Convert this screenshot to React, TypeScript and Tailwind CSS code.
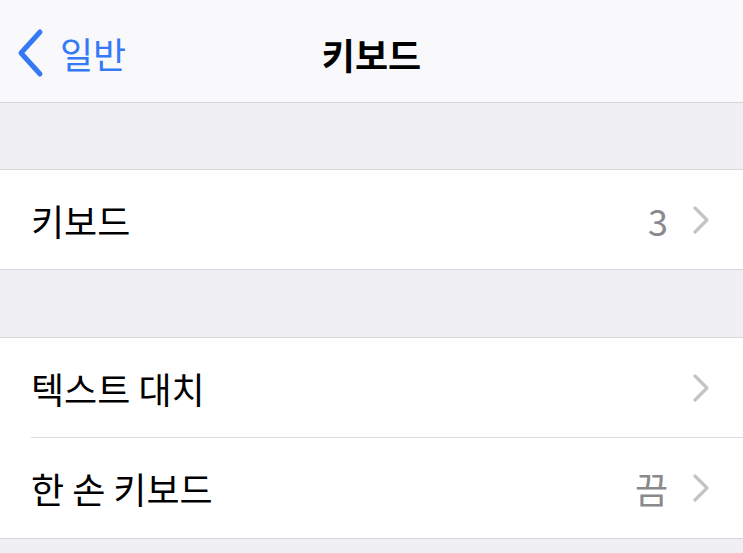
const font = { fontFamily: '"Noto Sans CJK KR", "Noto Sans", sans-serif' };

type Row = { label: string; value?: string };

const groups: Row[][] = [
  [{ label: "키보드", value: "3" }],
  [{ label: "텍스트 대치" }, { label: "한 손 키보드", value: "끔" }],
];

function BackChevron() {
  return (
    <svg width="30" height="50" viewBox="0 0 30 50" fill="none" className="text-[#3579f6]">
      <path d="M25 4 L6 25 L25 46" stroke="currentColor" strokeWidth="5" strokeLinecap="round" strokeLinejoin="round" />
    </svg>
  );
}

function Disclosure() {
  return (
    <svg width="18" height="30" viewBox="0 0 18 30" fill="none" className="text-[#c4c4c8]">
      <path d="M3 3 L15 15 L3 27" stroke="currentColor" strokeWidth="3.2" strokeLinecap="round" strokeLinejoin="round" />
    </svg>
  );
}

export default function App() {
  return (
    <div style={font} className="h-[553px] w-[743px] overflow-hidden bg-[#efeff4] text-black">
      <header className="relative flex h-[103px] items-center border-b border-[#d4d4d8] bg-[#f9f9fb]">
        <div className="flex items-center pl-[15px] pt-[4px] text-[#3579f6]">
          <BackChevron />
          <span className="ml-[15px] text-[36px] leading-none">일반</span>
        </div>
        <h1 className="absolute left-1/2 top-[36px] -translate-x-1/2 text-[36px] font-bold leading-none">키보드</h1>
      </header>

      {groups.map((rows, gi) => (
        <section
          key={gi}
          className={`${gi === 0 ? "mt-[66px]" : "mt-[67px]"} border-y border-[#d8d8dc] bg-white`}
        >
          {rows.map((row, ri) => (
            <div key={row.label} className="pl-[31px]">
              <div
                className={`flex items-center pr-[33px] ${gi === 0 ? "h-[99px]" : "h-[100px]"} ${
                  ri < rows.length - 1 ? "border-b border-[#dcdce0]" : ""
                }`}
              >
                <span className="flex-1 text-[36px] leading-none">{row.label}</span>
                {row.value ? (
                  <span className="mr-[24px] text-[36px] leading-none text-[#8a8a8e]">{row.value}</span>
                ) : null}
                <Disclosure />
              </div>
            </div>
          ))}
        </section>
      ))}
    </div>
  );
}
